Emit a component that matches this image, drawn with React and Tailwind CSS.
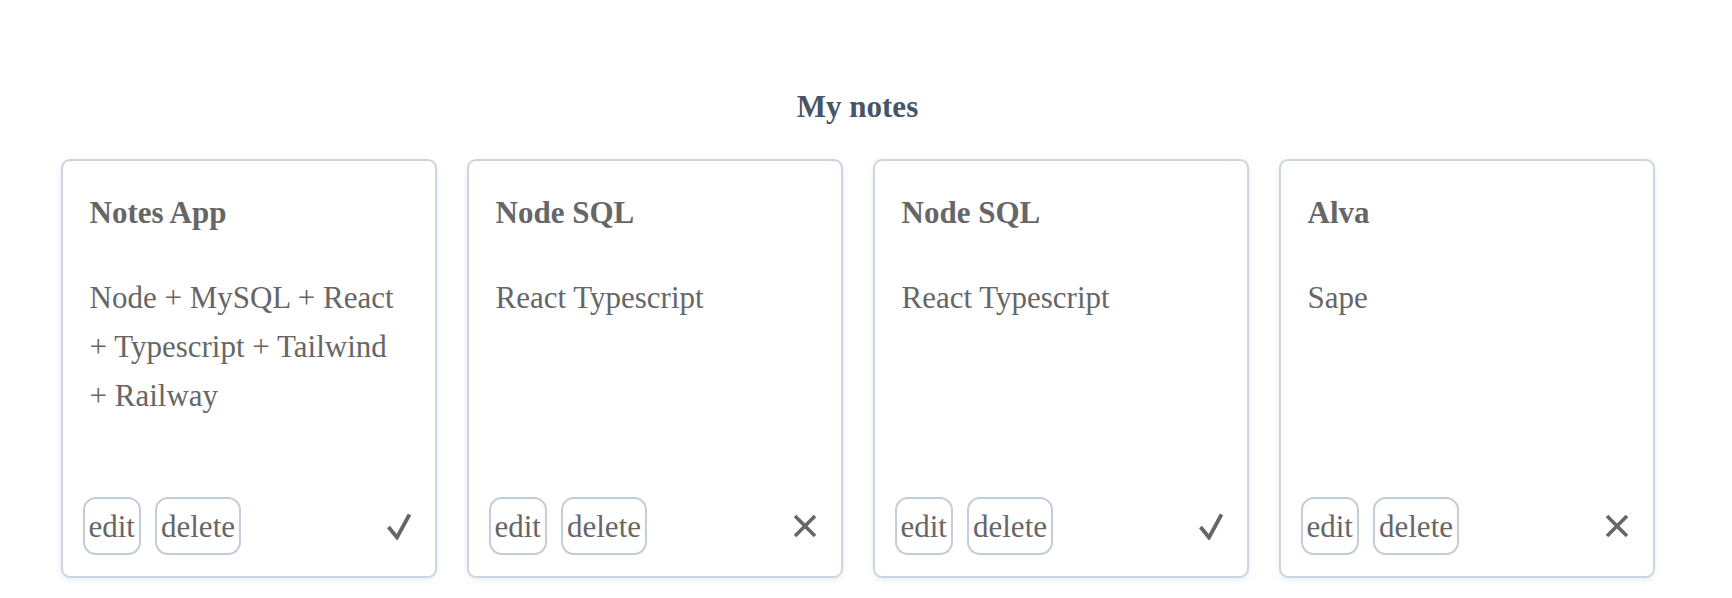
import React from 'react';

const notes = [
  { title: 'Notes App', body: 'Node + MySQL + React + Typescript + Tailwind + Railway', done: true },
  { title: 'Node SQL', body: 'React Typescript', done: false },
  { title: 'Node SQL', body: 'React Typescript', done: true },
  { title: 'Alva', body: 'Sape', done: false },
];

const CheckIcon = () => (
  <svg width="24" height="27" viewBox="0 0 24 27" className="text-[#666]">
    <path d="M1.5 14 L10 24.5 L22.5 1.5" fill="none" stroke="currentColor" strokeWidth="3.8" strokeLinejoin="miter" />
  </svg>
);

const CrossIcon = () => (
  <svg width="24" height="24" viewBox="0 0 24 24" className="text-[#666]">
    <path d="M2 2 L22 22 M22 2 L2 22" fill="none" stroke="currentColor" strokeWidth="3.6" />
  </svg>
);

const NoteCard = ({ note }) => {
  return (
    <div className="w-[376px] h-[419px] flex flex-col border-2 border-[#cbd5e1] rounded-[9px] bg-white shadow-[0_2px_6px_rgba(148,163,184,0.18)] px-[20px] pt-[20px] pb-[21px]">
      <h2 className="px-[7px] pt-[7px] font-bold leading-[49px]">{note.title}</h2>
      <p className="px-[7px] mt-[36px] leading-[49px]">{note.body}</p>
      <div className="mt-auto flex items-center">
        <div className="flex gap-[14px]">
          <button className="h-[58px] px-[4px] border-2 border-[#c3ccda] rounded-[13px] leading-[51px]">edit</button>
          <button className="h-[58px] px-[4px] border-2 border-[#c3ccda] rounded-[13px] leading-[51px]">delete</button>
        </div>
        <div className="ml-auto mr-[4px] flex items-center">
          {note.done ? <CheckIcon /> : <CrossIcon />}
        </div>
      </div>
    </div>
  );
};

export default function App() {
  return (
    <div className="w-full min-h-[598px] bg-white text-[#666] text-[31px] font-['Liberation_Serif',serif] pr-[17px]">
      <h1 className="pt-[82px] text-center font-bold text-[#475569] leading-[49px]">My notes</h1>
      <div className="mt-[28px] flex justify-center gap-[30px]">
        {notes.map((note, i) => (
          <NoteCard key={i} note={note} />
        ))}
      </div>
    </div>
  );
}
